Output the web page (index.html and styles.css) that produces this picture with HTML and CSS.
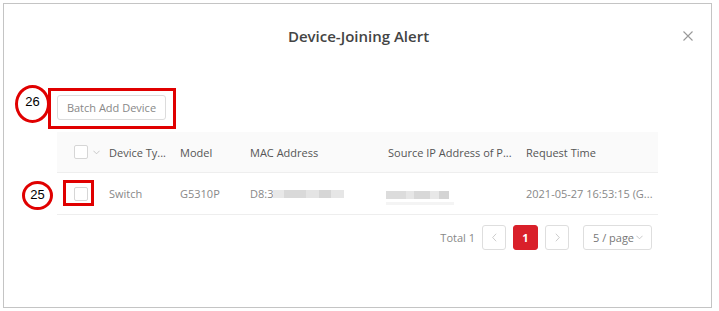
FILE: index.html
```html
<!DOCTYPE html>
<html>
<head>
  <title>Device-Joining Alert</title>
  <meta name="viewport" content="width=device-width, initial-scale=1">
  <link rel="stylesheet" href="styles.css">
</head>
<body>
  <div id="dialog">
    <!-- Header -->
    <div class="dlg-header">
      <span class="dlg-title">Device-Joining Alert</span>
      <svg class="dlg-close" viewBox="0 0 10 10">
        <path d="M0.5 0.5 L9.5 9.5 M9.5 0.5 L0.5 9.5" />
      </svg>
    </div>

    <div class="dlg-body">
      <!-- Toolbar -->
      <div class="toolbar">
        <div class="mark mark-26">26</div>
        <div class="mark-box box-26"></div>
        <button class="btn">Batch Add Device</button>
      </div>

      <!-- Table -->
      <div class="table">
        <div class="tr thead">
          <div class="td td-check">
            <span class="check"></span>
            <svg class="caret" viewBox="0 0 8 5"><path d="M0.5 0.5 L4 4 L7.5 0.5" /></svg>
          </div>
          <div class="td">Device Ty...</div>
          <div class="td">Model</div>
          <div class="td">MAC Address</div>
          <div class="td">Source IP Address of P...</div>
          <div class="td">Request Time</div>
        </div>
        <div class="tr tbody">
          <div class="mark mark-25">25</div>
          <div class="mark-box box-25"></div>
          <div class="td td-check"><span class="check"></span></div>
          <div class="td">Switch</div>
          <div class="td">G5310P</div>
          <div class="td">D8:3<span class="blur blur-mac"></span></div>
          <div class="td"><span class="blur blur-ip"></span><span class="blur-line"></span></div>
          <div class="td">2021-05-27 16:53:15 (G...</div>
        </div>
      </div>

      <!-- Pagination -->
      <div class="pager">
        <span class="total">Total 1</span>
        <span class="pg-btn">
          <svg viewBox="0 0 6 10"><path d="M5 0.5 L0.8 5 L5 9.5" /></svg>
        </span>
        <span class="pg-btn active">1</span>
        <span class="pg-btn">
          <svg viewBox="0 0 6 10"><path d="M1 0.5 L5.2 5 L1 9.5" /></svg>
        </span>
        <span class="pg-size">5 / page<svg viewBox="0 0 8 5"><path d="M0.5 0.5 L4 4 L7.5 0.5" /></svg></span>
      </div>
    </div>
  </div>
</body>
</html>
```

FILE: styles.css
```css
/* Base */
html, body {
  margin: 0;
  padding: 0;
  background: #ffffff;
  font-family: "Open Sans", Arial, sans-serif;
  color: #666;
}
/* Dialog frame */
#dialog {
  margin: 3px;
  width: 707px;
  height: 303px;
  border: 1px solid #c4c4c4;
  position: relative;
}
.dlg-header {
  height: 64px;
  display: flex;
  align-items: center;
  justify-content: center;
  position: relative;
}
.dlg-title {
  font-size: 15px;
  font-weight: 600;
  color: #444;
  margin-left: 2px;
}
.dlg-close {
  position: absolute;
  right: 18px;
  top: 27px;
  width: 10px;
  height: 10px;
}
.dlg-close path {
  stroke: #999;
  stroke-width: 1.1;
  fill: none;
}
.dlg-body {
  padding: 27px 53px 0 53px;
}
/* Toolbar */
.toolbar {
  position: relative;
  height: 25px;
}
.btn {
  height: 25px;
  width: 109px;
  padding: 0;
  border: 1px solid #dcdcdc;
  border-radius: 3px;
  background: #fff;
  color: #888;
  font-family: "Open Sans", Arial, sans-serif;
  font-size: 11px;
}
/* Annotation marks */
.mark {
  position: absolute;
  box-sizing: border-box;
  border: 3px solid #e00000;
  border-radius: 50%;
  background: #fff;
  color: #000;
  font-family: "Liberation Sans", Arial, sans-serif;
  font-size: 13px;
  display: flex;
  align-items: center;
  justify-content: center;
}
.mark-26 {
  left: -42px;
  top: -10px;
  width: 35px;
  height: 38px;
  padding-bottom: 5px;
}
.mark-25 {
  left: -35px;
  top: 8px;
  width: 31px;
  height: 29px;
  padding-bottom: 2px;
}
.mark-box {
  position: absolute;
  box-sizing: border-box;
  border: 3px solid #e00000;
}
.box-26 {
  left: -9px;
  top: -7px;
  width: 128px;
  height: 41px;
}
.box-25 {
  left: 6px;
  top: 7px;
  width: 31px;
  height: 26px;
}
/* Table */
.table {
  margin-top: 12px;
}
.tr {
  display: grid;
  grid-template-columns: 44px 71px 70px 138px 138px 1fr;
  align-items: center;
  position: relative;
  font-size: 11px;
}
.thead {
  height: 40px;
  background: #fafafa;
  border-bottom: 1px solid #eeeeee;
  color: #555;
}
.tbody {
  height: 41px;
  border-bottom: 1px solid #eeeeee;
  color: #888;
}
.td {
  padding-left: 8px;
  white-space: nowrap;
  display: flex;
  align-items: center;
  position: relative;
}
.td-check {
  padding-left: 17px;
}
.check {
  width: 12px;
  height: 12px;
  border: 1px solid #d6d6d6;
  border-radius: 2px;
  background: #fff;
}
.caret {
  width: 7px;
  height: 5px;
  margin-left: 5px;
}
.caret path, .pg-size path {
  stroke: #bbb;
  fill: none;
  stroke-width: 0.9;
}
/* Blurred values */
.blur {
  display: inline-block;
  height: 8px;
}
.blur-mac {
  width: 71px;
  margin-top: 1px;
  background: linear-gradient(90deg, #e8e8e8 0, #e8e8e8 11px, #d9d9d9 11px, #d9d9d9 33px, #e4e4e4 33px, #e4e4e4 46px, #d6d6d6 46px, #d6d6d6 58px, #e6e6e6 58px);
}
.blur-ip {
  width: 63px;
  margin-top: 3px;
  margin-left: -2px;
  background: linear-gradient(90deg, #dcdcdc 0, #dcdcdc 20px, #e6e6e6 20px, #e6e6e6 28px, #d8d8d8 28px, #d8d8d8 44px, #e8e8e8 44px, #e8e8e8 53px, #d4d4d4 53px);
}
.blur-line {
  position: absolute;
  left: 6px;
  top: 14px;
  width: 68px;
  height: 3px;
  background: #f4f4f4;
}
/* Pagination */
.pager {
  display: flex;
  justify-content: flex-end;
  align-items: center;
  margin-top: 10px;
  padding-right: 6px;
  font-size: 11px;
}
.total {
  color: #888;
  margin-right: 7px;
}
.pg-btn {
  box-sizing: border-box;
  width: 24px;
  height: 25px;
  border: 1px solid #dedede;
  border-radius: 3px;
  display: flex;
  align-items: center;
  justify-content: center;
  margin-right: 7px;
}
.pg-btn svg {
  width: 5px;
  height: 9px;
}
.pg-btn path {
  stroke: #bbb;
  fill: none;
  stroke-width: 0.9;
}
.pg-btn.active {
  width: 25px;
  background: #d9202a;
  border-color: #d9202a;
  color: #fff;
  font-weight: 700;
}
.pg-size {
  box-sizing: border-box;
  margin-left: 7px;
  margin-right: 0;
  width: 69px;
  height: 25px;
  border: 1px solid #dedede;
  border-radius: 3px;
  display: flex;
  align-items: center;
  padding-left: 9px;
  color: #777;
}
.pg-size svg {
  width: 7px;
  height: 5px;
  margin-left: 2px;
}
```
